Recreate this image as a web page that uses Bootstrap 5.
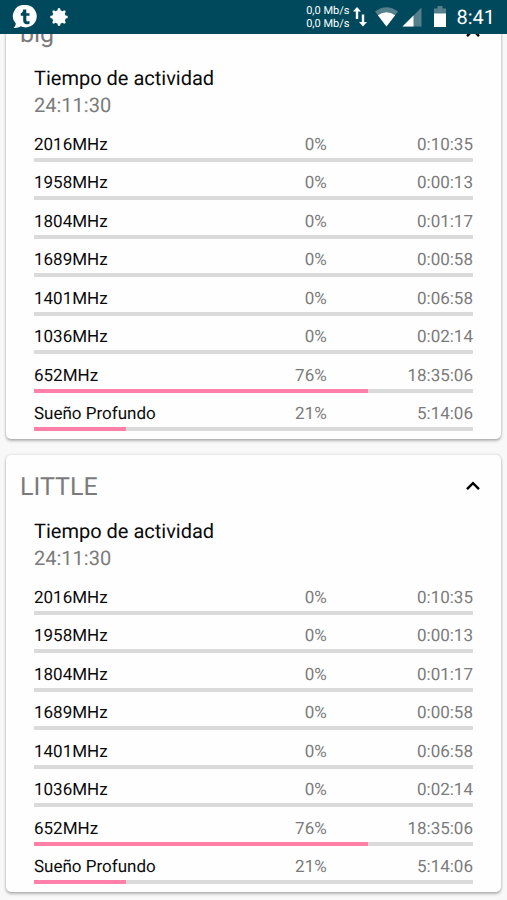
<!DOCTYPE html>
<html lang="es">
<head>
<meta charset="utf-8">
<meta name="viewport" content="width=device-width, initial-scale=1">
<title>Tiempo de actividad</title>
<link href="https://cdn.jsdelivr.net/npm/bootstrap@5.3.0/dist/css/bootstrap.min.css" rel="stylesheet">
<style>
body { font-family: Roboto, "Liberation Sans", sans-serif; background: #f8f8f8; color: #0a0a0a; text-rendering: geometricPrecision; }
.status-bar { height: 34px; background: #00495d; color: #fff; padding: 0 12px; }
.net-speed { font-size: 11px; line-height: 13px; }
.clock { font-size: 20px; line-height: 24px; }
.battery { margin: 0 10px 0 12px; }
.cluster-list { padding: 2px 6px 8px; gap: 16px; }
.cluster { border: 0; border-radius: 5px; background: #fefefe; box-shadow: 0 2px 3px rgba(0,0,0,.26), 0 0 3px rgba(0,0,0,.16); }
.cluster-head { height: 63px; padding: 2px 14px 0; }
.cluster-name { font-size: 25px; line-height: 32px; font-weight: 400; color: #7b7b7b; }
.toggle { width: 28px; height: 28px; color: #000; }
.cluster-data { padding: 0 28px 8px; }
.uptime { font-size: 20px; line-height: 27px; font-weight: 400; margin-bottom: 4px; }
.dim { color: #7b7b7b; }
.freqs { min-height: 308px; font-size: 17px; line-height: 26px; }
.freq { grid-template-columns: repeat(3, 1fr); align-content: end; }
.freq th { font-weight: 400; }
.freq .meter-cell { grid-column: 1 / -1; }
.meter { height: 4px; border-radius: 0; background: #dadada; }
.meter .progress-bar { background: #ff80a9; }
</style>
<script src="https://cdn.jsdelivr.net/npm/bootstrap@5.3.0/dist/js/bootstrap.bundle.min.js" defer></script>
</head>
<body>
<header class="status-bar fixed-top d-flex align-items-center justify-content-between">
  <div class="d-flex align-items-center gap-2">
    <svg width="25" height="24" viewBox="0 0 25 24" aria-hidden="true"><path fill="#fff" d="M13.500 0a11.200 11.200 0 1 1-4.800 21.300C7 22.500 4 23.300 1.500 22.900c1.500-1 2.200-2.400 2.300-4.300A11.200 11.200 0 0 1 13.500 0Z"/><path fill="#00495d" d="M11.200 4.500h3.100v3.700h3.200v2.600h-3.200v4.200c0 1.600 1.500 1.800 3.200 1v2.700c-3.400 1.300-6.300.2-6.300-3.300v-4.600H8.800V8.300c1.600-.5 2.300-1.800 2.400-3.800Z"/></svg>
    <svg class="ms-1" width="18" height="18" viewBox="-1 0 18 18" overflow="visible" aria-hidden="true"><g fill="#fff"><circle cx="9" cy="9" r="6.800"/><path id="tooth" d="M7.400 3 7.800.7Q9-.5 10.200.7L10.600 3Z"/><use href="#tooth" transform="rotate(45 9 9)"/><use href="#tooth" transform="rotate(90 9 9)"/><use href="#tooth" transform="rotate(135 9 9)"/><use href="#tooth" transform="rotate(180 9 9)"/><use href="#tooth" transform="rotate(225 9 9)"/><use href="#tooth" transform="rotate(270 9 9)"/><use href="#tooth" transform="rotate(315 9 9)"/></g></svg>
  </div>
  <div class="d-flex align-items-center">
    <div class="net-speed text-end">0,0 Mb/s<br>0,0 Mb/s</div>
    <svg class="ms-1" width="14" height="20" viewBox="0 0 14 20" aria-hidden="true"><path fill="#fff" d="M4 0 8 4.500H5.200V12H2.800V4.500H0ZM10 19.500 6 15h2.800V7.500h2.400V15H14Z"/></svg>
    <svg class="ms-2" width="23" height="20" viewBox="0 0 24 20" preserveAspectRatio="none" aria-hidden="true"><path fill="#547f8b" d="M12 19.500 0 4.500Q12-4 24 4.500Z"/><path fill="#fff" d="M12 19.500 3 8.200Q12 2.400 21 8.200Z"/></svg>
    <svg class="ms-1" width="20" height="20" viewBox="0 0 20 20" aria-hidden="true"><path fill="#547f8b" d="M19.500.5v19H.5Z"/><path fill="#fff" d="M11.500 8.500v11H.5Z"/></svg>
    <svg class="battery" width="12" height="22" viewBox="0 0 12 22" aria-hidden="true"><path fill="#547f8b" d="M3.500 0h5v2.500H12V8H0V2.500h3.500Z"/><path fill="#fff" d="M0 7.500h12V21H0Z"/></svg>
    <time class="clock" datetime="08:41">8:41</time>
  </div>
</header>

<main class="cluster-list d-flex flex-column" id="clusters"></main>

<template id="cluster-template">
  <section class="card cluster">
    <div class="cluster-head d-flex align-items-center justify-content-between">
      <h2 class="cluster-name m-0"></h2>
      <button type="button" class="toggle btn p-0 border-0 d-flex align-items-center justify-content-center" data-bs-toggle="collapse" aria-expanded="true" aria-label="Contraer">
        <svg width="16" height="14" viewBox="0 0 16 14" aria-hidden="true"><path d="M2 8.200 8 2.200l6 6" fill="none" stroke="currentColor" stroke-width="2.400"/></svg>
      </button>
    </div>
    <div class="cluster-data collapse show">
      <h3 class="uptime">Tiempo de actividad<br><span class="dim">24:11:30</span></h3>
      <table class="freqs d-grid w-100"></table>
    </div>
  </section>
</template>

<script>
const states = [
  ["2016MHz", 0, "0:10:35"],
  ["1958MHz", 0, "0:00:13"],
  ["1804MHz", 0, "0:01:17"],
  ["1689MHz", 0, "0:00:58"],
  ["1401MHz", 0, "0:06:58"],
  ["1036MHz", 0, "0:02:14"],
  ["652MHz", 76, "18:35:06"],
  ["Sueño Profundo", 21, "5:14:06"]
];
const template = document.getElementById("cluster-template");
for (const name of ["big", "LITTLE"]) {
  const node = template.content.cloneNode(true);
  node.querySelector(".cluster-name").textContent = name;
  node.querySelector(".cluster-data").id = "data-" + name;
  node.querySelector(".toggle").dataset.bsTarget = "#data-" + name;
  node.querySelector(".freqs").innerHTML = "<tbody class='d-grid'>" + states.map(([label, share, time]) => `
    <tr class="freq d-grid">
      <th scope="row" class="p-0 text-nowrap">${label}</th>
      <td class="dim p-0 text-end">${share}%</td>
      <td class="dim p-0 text-end">${time}</td>
      <td class="meter-cell p-0"><div class="progress meter" role="progressbar" aria-label="${label}" aria-valuenow="${share}" aria-valuemin="0" aria-valuemax="100"><div class="progress-bar" style="width:${share}%"></div></div></td>
    </tr>`).join("") + "</tbody>";
  document.getElementById("clusters").append(node);
}
</script>
</body>
</html>
